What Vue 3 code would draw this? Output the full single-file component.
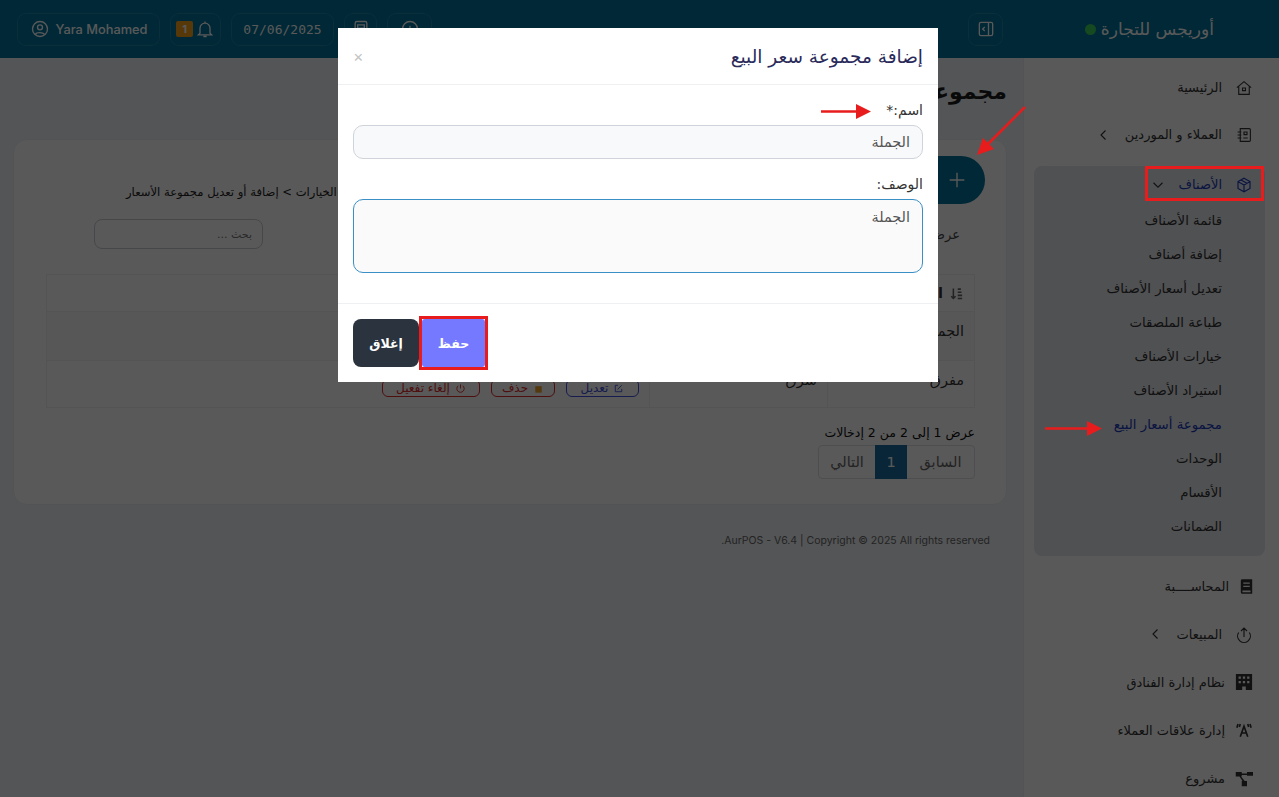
<template>
  <div class="page" dir="rtl">
    <header class="topbar">
      <div class="brand">
        <span>أوريجس للتجارة</span>
        <i class="status-dot"></i>
      </div>
      <button class="pill collapse-btn">
        <svg viewBox="0 0 24 24" class="ic"><rect x="4" y="4" width="16" height="16" rx="2" /><path d="M15 4v16M10.500 9.500 8 12l2.500 2.500" /></svg>
      </button>
      <div class="top-tools">
        <div class="pill square-wide">
          <svg viewBox="0 0 24 24" class="ic"><circle cx="12" cy="12" r="9" /><path d="M12 8v4l2 2" /></svg>
        </div>
        <div class="pill square">
          <svg viewBox="0 0 24 24" class="ic"><rect x="5" y="3" width="14" height="18" rx="2" /><path d="M8 7h8v4H8z" /></svg>
        </div>
        <div class="pill date">07/06/2025</div>
        <div class="pill bell">
          <svg viewBox="0 0 24 24" class="ic"><path d="M6 17V11a6 6 0 0 1 12 0v6l2 2H4zM10 21h4M12 3v2" /></svg>
          <span class="bell-badge">1</span>
        </div>
        <div class="pill user">
          <span>Yara Mohamed</span>
          <svg viewBox="0 0 24 24" class="ic"><circle cx="12" cy="12" r="9" /><circle cx="12" cy="10" r="3" /><path d="M6.500 18.500c1-3 9-3 11 0" /></svg>
        </div>
      </div>
    </header>

    <div class="body-row">
      <aside class="sidebar">
        <a v-for="item in navTop" :key="item.label" class="nav-item">
          <svg viewBox="0 0 24 24" class="nav-ic"><path :d="item.d" /></svg>
          <span>{{ item.label }}</span>
          <svg v-if="item.more" viewBox="0 0 24 24" class="chev"><path d="M14 6l-6 6 6 6" /></svg>
        </a>

        <div class="nav-group">
          <a class="nav-item group-head">
            <svg viewBox="0 0 24 24" class="nav-ic"><path :d="boxIcon" /></svg>
            <span>الأصناف</span>
            <svg viewBox="0 0 24 24" class="chev"><path d="M6 9l6 6 6-6" /></svg>
          </a>
          <a v-for="sub in subItems" :key="sub" class="sub-item" :class="{ active: sub === activeSub }">{{ sub }}</a>
        </div>

        <a v-for="item in navBottom" :key="item.label" class="nav-item lower">
          <svg :viewBox="item.box || '0 0 24 24'" class="nav-ic" :class="[item.cls, { solid: item.solid }]"><path :d="item.d" /></svg>
          <span>{{ item.label }}</span>
          <svg v-if="item.more" viewBox="0 0 24 24" class="chev"><path d="M14 6l-6 6 6 6" /></svg>
        </a>
      </aside>

      <main class="content">
        <h1 class="page-title">مجموعة أسعار البيع</h1>

        <section class="card">
          <div class="card-head">
            <button class="add-btn">
              <svg viewBox="0 0 24 24"><path d="M12 4v16M4 12h16" /></svg>
            </button>
            <p class="crumbs">الرئيسية &gt; الخيارات &gt; إضافة أو تعديل مجموعة الأسعار</p>
          </div>

          <div class="card-body">
            <div class="tools-row">
              <span class="show-label">عرض</span>
              <input class="search" placeholder="بحث ..." />
            </div>

            <table class="groups">
              <thead>
                <tr>
                  <th class="c-name">
                    <svg viewBox="0 0 24 24" class="sort"><path d="M7 4v16M3.500 16.500 7 20l3.500-3.500M14 5h5M14 10h6M14 15h7M14 20h7" /></svg>
                    <span>اسم</span>
                  </th>
                  <th class="c-desc">الوصف</th>
                  <th>الإجراء</th>
                </tr>
              </thead>
              <tbody>
                <tr v-for="row in rows" :key="row.name">
                  <td>{{ row.name }}</td>
                  <td>{{ row.desc }}</td>
                  <td>
                    <div class="actions">
                      <span class="act act-blue">
                        <svg viewBox="0 0 24 24"><path d="M11 5H5v14h14v-6M10 14l9-9" /></svg>تعديل
                      </span>
                      <span class="act act-red">
                        <svg viewBox="0 0 24 24" class="trash"><path d="M5 7h14v14H5z" /></svg>حذف
                      </span>
                      <span class="act act-red">
                        <svg viewBox="0 0 24 24"><path d="M12 3v9M7 6a8 8 0 1 0 10 0" /></svg>إلغاء تفعيل
                      </span>
                    </div>
                  </td>
                </tr>
              </tbody>
            </table>

            <p class="entries">عرض 1 إلى 2 من 2 إدخالات</p>
            <div class="pager">
              <span class="prev">السابق</span>
              <span class="current">1</span>
              <span class="next">التالي</span>
            </div>
          </div>
        </section>

        <footer class="foot">
          AurPOS - V6.4 | Copyright © 2025 All rights reserved.
        </footer>
      </main>
    </div>

    <div class="backdrop">
      <div class="modal">
        <div class="modal-head">
          <h2>إضافة مجموعة سعر البيع</h2>
          <span class="close-x">×</span>
        </div>
        <div class="modal-body">
          <label>اسم:*</label>
          <input class="field" value="الجملة" />
          <label class="second">الوصف:</label>
          <textarea class="field area">الجملة</textarea>
        </div>
        <div class="modal-foot">
          <button class="btn btn-close">إغلاق</button>
          <button class="btn btn-save">حفظ</button>
        </div>
      </div>
    </div>

    <!-- red annotations drawn over the whole screenshot -->
    <svg class="marks" width="1279" height="797" viewBox="0 0 1279 797">
      <rect x="1146.500" y="167.500" width="116" height="32" />
      <rect x="420.500" y="317.500" width="66" height="51" />
      <path class="line" d="M821 111.500h36M1045 428.500h44M1025 107l-38 38" />
      <path class="head" d="M856 104l15 7.500-15 7.500zM1087 421l15 7.500-15 7.500zM977 155l6-17 11 11z" />
    </svg>
  </div>
</template>

<script setup>
const boxIcon = 'M12 3l8 4.500v9L12 21l-8-4.500v-9zM4 7.500l8 4.500 8-4.500M12 12v9M8 5.200l8 4.600'

const navTop = [
  { label: 'الرئيسية', d: 'M2.500 11.500 12 3.500l9.500 8M5 9.500V20.500h14V9.500M10 12h4v3.500h-4z' },
  {
    label: 'العملاء و الموردين',
    more: true,
    d: 'M7 3.500h12a1.500 1.500 0 0 1 1.500 1.500v14a1.500 1.500 0 0 1-1.500 1.500H7zM3.500 8h5M3.500 12h5M3.500 16h5M12 8h4v3.500h-4zM11 16h6',
  },
]

const subItems = [
  'قائمة الأصناف',
  'إضافة أصناف',
  'تعديل أسعار الأصناف',
  'طباعة الملصقات',
  'خيارات الأصناف',
  'استيراد الأصناف',
  'مجموعة أسعار البيع',
  'الوحدات',
  'الأقسام',
  'الضمانات',
]
const activeSub = 'مجموعة أسعار البيع'

const navBottom = [
  {
    label: 'المحاســــبة',
    solid: true,
    cls: 'book',
    box: '4 2 16 20',
    d: 'M6 3h13v18H7a2 2 0 0 1-2-2V5a2 2 0 0 1 1-2zM8 7v1.500h8V7zM8 11v1.500h8V11zM7 17v2h10v-2z',
  },
  { label: 'المبيعات', more: true, d: 'M8 8l4-4 4 4M12 4v12M5 10a8.500 8.500 0 1 0 14 0' },
  {
    label: 'نظام إدارة الفنادق',
    solid: true,
    cls: 'near',
    box: '2 2 20 20',
    d: 'M3 3h18v18h-7v-4h-4v4H3zM6 6v2.500h2.500V6zM10.700 6v2.500h2.500V6zM15.500 6v2.500H18V6zM6 11v2.500h2.500V11zM10.700 11v2.500h2.500V11zM15.500 11v2.500H18V11z',
  },
  {
    label: 'إدارة علاقات العملاء',
    cls: 'near heavy',
    d: 'M7 21 12 7l5 14M9 16h6M4 4 2.500 9M7 4 5.800 8M20 4l1.500 5M17 4l1.200 4',
  },
  {
    label: 'مشروع',
    solid: true,
    cls: 'near',
    d: 'M1 4h8v6H1zM16 4h8v5h-8zM9 16h7v7H9zM9 6h7v2H9zM6 10h2l5 6h-3z',
  },
]

const rows = [
  { name: 'الجملة', desc: 'الجملة' },
  { name: 'مفرق', desc: 'شرق' },
]
</script>

<style>
html,
body {
  margin: 0;
  height: 100%;
  overflow: hidden;
  background: #f1f4f7;
}
</style>

<style scoped>
.page {
  position: relative;
  width: 1279px;
  height: 797px;
  overflow: hidden;
  font-family: "DejaVu Sans", "Noto Sans", sans-serif;
  color: #212529;
  background: #f1f4f7;
}

/* header */
.topbar {
  display: flex;
  align-items: center;
  height: 58px;
  background: #00729a;
}
.brand {
  width: 256px;
  box-sizing: border-box;
  display: flex;
  align-items: center;
  gap: 5px;
  padding-right: 65px;
  font-size: 17px;
  color: #fff;
}
.status-dot {
  width: 11px;
  height: 11px;
  border-radius: 50%;
  background: #3ed15c;
}
.pill {
  display: flex;
  align-items: center;
  justify-content: center;
  box-sizing: border-box;
  height: 33px;
  border: 1px solid rgba(255, 255, 255, 0.12);
  border-radius: 9px;
  background: transparent;
  color: #fff;
  padding: 0;
}
.ic {
  width: 20px;
  height: 20px;
  fill: none;
  stroke: currentColor;
  stroke-width: 1.600;
}
.collapse-btn {
  width: 35px;
  margin-right: 20px;
}
.top-tools {
  display: flex;
  align-items: center;
  gap: 10px;
  margin-right: auto;
  padding-left: 17px;
}
.square-wide {
  width: 45px;
}
.square {
  width: 33px;
}
.date {
  width: 103px;
  font-family: "DejaVu Sans Mono", monospace;
  font-size: 13px;
}
.bell {
  width: 51px;
  gap: 2px;
}
.bell-badge {
  width: 17px;
  height: 16px;
  border-radius: 2px;
  background: #f9a11b;
  font-family: Inter, sans-serif;
  font-size: 11px;
  font-weight: 700;
  text-align: center;
  line-height: 16px;
}
.user {
  width: 143px;
  gap: 6px;
  font-family: Inter, sans-serif;
  font-size: 12.800px;
  font-weight: 500;
}

.body-row {
  display: flex;
  height: 739px;
}

/* sidebar */
.sidebar {
  flex: 0 0 256px;
  box-sizing: border-box;
  padding: 12px 14px 0 10px;
  background: #fff;
  border-left: 1px solid #eee;
  overflow: hidden;
}
.nav-item {
  display: flex;
  align-items: center;
  height: 35px;
  margin-bottom: 12px;
  padding-right: 12px;
  font-size: 13px;
  color: #333;
}
.nav-item.lower {
  height: 36px;
  margin-bottom: 12px;
}
.nav-ic {
  flex: none;
  width: 18px;
  height: 18px;
  margin-left: 13px;
  fill: none;
  stroke: #333;
  stroke-width: 1.500;
}
.nav-ic.solid {
  fill: #333;
  stroke: none;
  fill-rule: evenodd;
}
.nav-ic.near {
  margin-left: 10px;
}
.nav-ic.heavy {
  stroke-width: 2.200;
}
.nav-ic.book {
  width: 13px;
  height: 17px;
  margin-left: 11px;
}
.chev {
  width: 18px;
  height: 18px;
  margin-right: 12px;
  fill: none;
  stroke: #333;
  stroke-width: 1.500;
}
.nav-group {
  height: 390px;
  margin: 14px 0 12px;
  padding-top: 1px;
  box-sizing: border-box;
  border-radius: 8px;
  background: #e5e8ec;
}
.group-head {
  margin-bottom: 1px;
  color: #1c39bb;
}
.group-head .nav-ic {
  stroke: #1c39bb;
}
.sub-item {
  display: flex;
  align-items: center;
  height: 34px;
  padding-right: 43px;
  font-size: 13.300px;
  color: #333;
}
.sub-item.active {
  color: #1c39bb;
}

/* content */
.content {
  flex: 1;
  min-width: 0;
  padding: 0 16px 0 13px;
}
.page-title {
  margin: 17px 0 30px;
  height: 34px;
  font-size: 22px;
  line-height: 34px;
  font-weight: 700;
  color: #1a1a1a;
}
.card {
  box-sizing: border-box;
  height: 366px;
  padding: 16px 21px 0 32px;
  background: #fff;
  border: 1px solid #eceef0;
  border-radius: 14px;
}
.card-head {
  display: flex;
  justify-content: space-between;
}
.card-body {
  margin-right: 10px;
}
.add-btn {
  flex: none;
  width: 150px;
  height: 48px;
  border: 0;
  border-radius: 24px;
  background: #00729a;
  display: flex;
  align-items: center;
  justify-content: flex-start;
  padding-right: 17px;
}
.add-btn svg {
  width: 22px;
  height: 22px;
  fill: none;
  stroke: #fff;
  stroke-width: 1.500;
}
.crumbs {
  margin: 28px 0 0 80px;
  font-size: 11.600px;
  line-height: 16px;
  color: #222;
}
.tools-row {
  display: flex;
  justify-content: space-between;
  align-items: center;
  margin-top: 15px;
  padding-right: 15px;
  font-size: 13px;
  color: #444;
}
.search {
  width: 169px;
  height: 30px;
  box-sizing: border-box;
  margin-left: 48px;
  padding: 0 10px;
  border: 1px solid #c9ccd0;
  border-radius: 8px;
  background: #fff;
  font: inherit;
  font-size: 11px;
}
.groups {
  width: 929px;
  table-layout: fixed;
  margin-top: 25px;
  border-collapse: collapse;
  font-size: 14.500px;
  border: 1px solid #f0f0f0;
}
.groups th,
.groups td {
  padding: 0 10px;
  border: 1px solid #f0f0f0;
  text-align: right;
  color: #333;
}
.groups td {
  padding-top: 11px;
  vertical-align: top;
}
.groups thead tr {
  height: 37px;
}
.groups tbody tr:nth-child(1) {
  height: 49px;
  background: #f8f8f8;
}
.groups tbody tr:nth-child(2) {
  height: 47px;
}
.c-name {
  width: 147px;
  box-sizing: border-box;
}
.c-name span {
  margin-right: 6px;
}
.c-desc {
  width: 178px;
  box-sizing: border-box;
}
.sort {
  width: 15px;
  height: 15px;
  vertical-align: middle;
  fill: none;
  stroke: #666;
  stroke-width: 2.500;
}
.actions {
  display: flex;
  gap: 11px;
  margin-top: 7px;
}
.act {
  display: inline-flex;
  align-items: center;
  justify-content: center;
  gap: 5px;
  box-sizing: border-box;
  height: 18px;
  padding: 0 7px;
  border: 1px solid currentColor;
  border-radius: 6px;
  font-size: 12px;
  white-space: nowrap;
}
.act svg {
  width: 11px;
  height: 11px;
  fill: none;
  stroke: currentColor;
  stroke-width: 2;
}
.act svg.trash {
  fill: #f0a02a;
  stroke: none;
}
.act-blue {
  width: 73px;
  color: #3f51e0;
}
.act-red {
  color: #e02b2b;
}
.act-red:nth-child(2) {
  width: 64px;
}
.act-red:nth-child(3) {
  width: 98px;
}
.entries {
  margin: 17px 0 4px;
  font-size: 12.500px;
  line-height: 16px;
  color: #111;
}
.pager {
  display: flex;
  width: 157px;
  height: 34px;
  box-sizing: border-box;
  border: 1px solid #dcdfe3;
  border-radius: 4px;
  font-size: 14.500px;
  color: #666;
}
.pager span {
  display: flex;
  align-items: center;
  justify-content: center;
  box-sizing: border-box;
}
.pager .prev {
  width: 67px;
}
.pager .next {
  width: 56px;
}
.pager .current {
  width: 32px;
  margin: -1px 0;
  background: #1b6aa0;
  color: #fff;
}
.foot {
  margin: 28px 17px 0 0;
  font-family: Inter, sans-serif;
  font-size: 10.500px;
  line-height: 16px;
  color: #666;
  text-align: right;
}

/* modal */
.backdrop {
  position: absolute;
  inset: 0;
  display: flex;
  justify-content: flex-end;
  align-items: flex-start;
  padding: 28px 341px 0 0;
  direction: ltr;
  background: rgba(0, 0, 0, 0.65);
}
.backdrop > .modal {
  direction: rtl;
}
.modal {
  width: 600px;
  height: 354px;
  background: #fff;
  display: flex;
  flex-direction: column;
}
.modal-head {
  flex: none;
  height: 57px;
  box-sizing: border-box;
  display: flex;
  align-items: center;
  justify-content: space-between;
  padding: 0 15px;
  border-bottom: 1px solid #eef0f2;
}
.modal-head h2 {
  margin: 0;
  font-size: 18.500px;
  font-weight: 400;
  color: #2a2a5a;
}
.close-x {
  font-family: Inter, sans-serif;
  font-size: 16px;
  color: #c4c4c4;
}
.modal-body {
  flex: none;
  height: 219px;
  box-sizing: border-box;
  padding: 16px 15px 0;
  border-bottom: 1px solid #eef0f2;
  font-size: 14px;
}
.modal-body label {
  display: block;
  height: 24px;
  line-height: 18px;
  color: #333;
}
.modal-body label.second {
  margin-top: 16px;
}
.field {
  display: block;
  width: 100%;
  height: 34px;
  box-sizing: border-box;
  padding: 0 12px;
  border: 1px solid #ced4da;
  border-radius: 10px;
  background: #f8f9fa;
  font: inherit;
  font-size: 14.400px;
  color: #555;
  outline: none;
  resize: none;
}
.field.area {
  height: 74px;
  padding-top: 9px;
  border-color: #3a8fc4;
  background: #fafafa;
}
.modal-foot {
  flex: 1;
  display: flex;
  direction: ltr;
  align-items: flex-start;
  gap: 3px;
  padding: 15px 15px 0;
}
.btn {
  height: 48px;
  border: 0;
  font: inherit;
  font-size: 12.500px;
  font-weight: 700;
  color: #fff;
  padding: 0;
}
.btn-close {
  width: 66px;
  border-radius: 8px;
  background: #2b333e;
}
.btn-save {
  width: 63px;
  border-radius: 3px;
  background: #7479ff;
}

/* annotations */
.marks {
  position: absolute;
  top: 0;
  left: 0;
  pointer-events: none;
}
.marks rect {
  fill: none;
  stroke: #e81c1c;
  stroke-width: 3;
}
.marks .line {
  fill: none;
  stroke: #e81c1c;
  stroke-width: 2.500;
}
.marks .head {
  fill: #e81c1c;
}
</style>
